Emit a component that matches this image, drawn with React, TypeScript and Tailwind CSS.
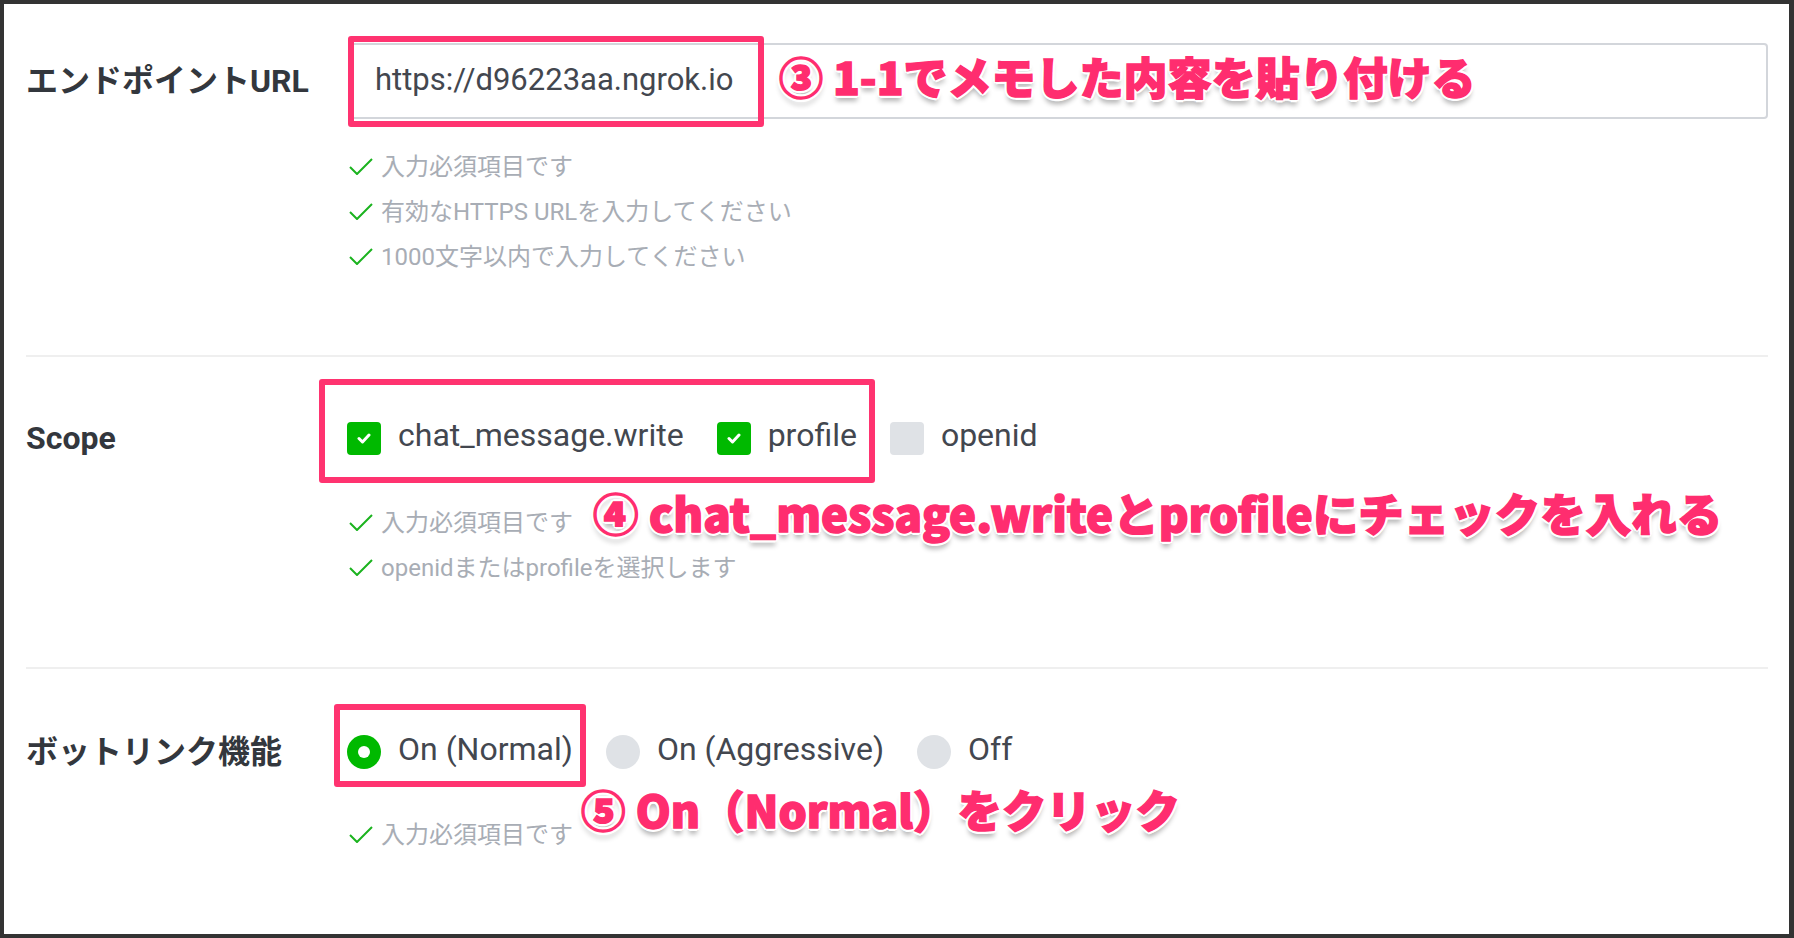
import React from "react";

const annotation =
  "whitespace-nowrap font-black leading-none text-[#ff2d6f] [-webkit-text-stroke:1.5px_#ff2d6f] [font-family:'Noto_Sans_CJK_JP',sans-serif] [text-shadow:3px_0_0_#fff,-3px_0_0_#fff,0_3px_0_#fff,0_-3px_0_#fff,2px_2px_0_#fff,-2px_2px_0_#fff,2px_-2px_0_#fff,-2px_-2px_0_#fff,0_6px_5px_rgba(0,0,0,0.3)]";

function Tick() {
  return (
    <svg width="24" height="17" viewBox="0 0 24 17" className="shrink-0">
      <polyline
        points="1,9 8,16 23,1"
        fill="none"
        stroke="#1bb31f"
        strokeWidth="2"
        strokeLinejoin="round"
      />
    </svg>
  );
}

function Hint({ children }: { children: React.ReactNode }) {
  return (
    <div className="flex h-[45px] items-center gap-[8px] text-[24px] text-[#a8adb5]">
      <Tick />
      <span>{children}</span>
    </div>
  );
}

function Checkbox({ checked, label }: { checked: boolean; label: string }) {
  return (
    <div className="flex items-center gap-[17px]">
      <span
        className={`flex h-[33px] w-[34px] items-center justify-center rounded-[4px] ${
          checked ? "bg-[#00b900]" : "bg-[#dfe2e6]"
        }`}
      >
        {checked ? (
          <svg width="14" height="11" viewBox="0 0 14 11">
            <polyline
              points="2,5.5 5.5,9 12,2"
              fill="none"
              stroke="#fff"
              strokeWidth="3"
              strokeLinecap="round"
              strokeLinejoin="round"
            />
          </svg>
        ) : null}
      </span>
      <span className="-translate-y-[3px] text-[32px] text-[#43474f]">{label}</span>
    </div>
  );
}

function Radio({ checked, label }: { checked: boolean; label: string }) {
  return (
    <div className="flex items-center gap-[17px]">
      <span
        className={`flex h-[34px] w-[34px] items-center justify-center rounded-full ${
          checked ? "bg-[#00b900]" : "bg-[#dfe2e6]"
        }`}
      >
        {checked ? <span className="h-[12px] w-[12px] rounded-full bg-white" /> : null}
      </span>
      <span className="-translate-y-[3px] text-[32px] text-[#43474f]">{label}</span>
    </div>
  );
}

function Label({ children }: { children: React.ReactNode }) {
  return (
    <div className="flex h-[76px] w-[321px] shrink-0 items-center text-[32px] font-bold text-[#33373d]">
      {children}
    </div>
  );
}

export default function App() {
  return (
    <div className="h-[938px] w-[1794px] overflow-hidden border-t-4 border-r-[5px] border-b-4 border-l-4 border-[#333] bg-white pr-[21px] pl-[22px] [font-family:Roboto,'Noto_Sans_CJK_JP',sans-serif]">
      <section className="flex border-b-2 border-[#efefef] pt-[39px] pb-[76px]">
        <Label>エンドポイントURL</Label>
        <div className="relative flex-1">
          <div className="relative">
            <div className="ml-[2px] flex h-[76px] items-center rounded-[4px] border-2 border-[#d3d6db] pl-[24px] text-[31px] text-[#43474f]">
              <span className="-translate-y-[1px]">https://d96223aa.ngrok.io</span>
            </div>
            <div className="absolute top-[-7px] left-[1px] h-[91px] w-[416px] rounded-[3px] border-[6px] border-[#ff3370]" />
            <div className="absolute top-[-5px] bottom-[5px] left-[432px] flex items-center">
              <span className={annotation + " text-[44px]"}>③ 1-1でメモした内容を貼り付ける</span>
            </div>
          </div>
          <div className="mt-[25px] ml-[2px]">
            <Hint>入力必須項目です</Hint>
            <Hint>有効なHTTPS URLを入力してください</Hint>
            <Hint>1000文字以内で入力してください</Hint>
          </div>
        </div>
      </section>

      <section className="flex border-b-2 border-[#efefef] pt-[43px] pb-[77px]">
        <Label>Scope</Label>
        <div className="relative flex-1">
          <div className="relative flex h-[76px] items-center gap-[33px]">
            <Checkbox checked label="chat_message.write" />
            <Checkbox checked label="profile" />
            <Checkbox checked={false} label="openid" />
            <div className="absolute top-[-21px] left-[-28px] h-[104px] w-[556px] rounded-[3px] border-[6px] border-[#ff3370]" />
          </div>
          <div className="mt-[24px] ml-[2px]">
            <Hint>入力必須項目です</Hint>
            <Hint>openidまたはprofileを選択します</Hint>
          </div>
          <div className="absolute top-[83px] left-[246px] flex h-[60px] items-center">
            <span className={annotation + " text-[45.5px]"}>④ chat_message.writeとprofileにチェックを入れる</span>
          </div>
        </div>
      </section>

      <section className="flex pt-[45px]">
        <Label>ボットリンク機能</Label>
        <div className="relative flex-1">
          <div className="relative flex h-[76px] items-center gap-[33px]">
            <Radio checked label="On (Normal)" />
            <Radio checked={false} label="On (Aggressive)" />
            <Radio checked={false} label="Off" />
            <div className="absolute top-[-10px] left-[-13px] h-[83px] w-[252px] rounded-[3px] border-[6px] border-[#ff3370]" />
          </div>
          <div className="mt-[22px] ml-[2px]">
            <Hint>入力必須項目です</Hint>
          </div>
          <div className="absolute top-[65px] left-[234px] flex h-[60px] items-center">
            <span className={annotation + " text-[44.5px]"}>⑤ On（Normal）をクリック</span>
          </div>
        </div>
      </section>
    </div>
  );
}
